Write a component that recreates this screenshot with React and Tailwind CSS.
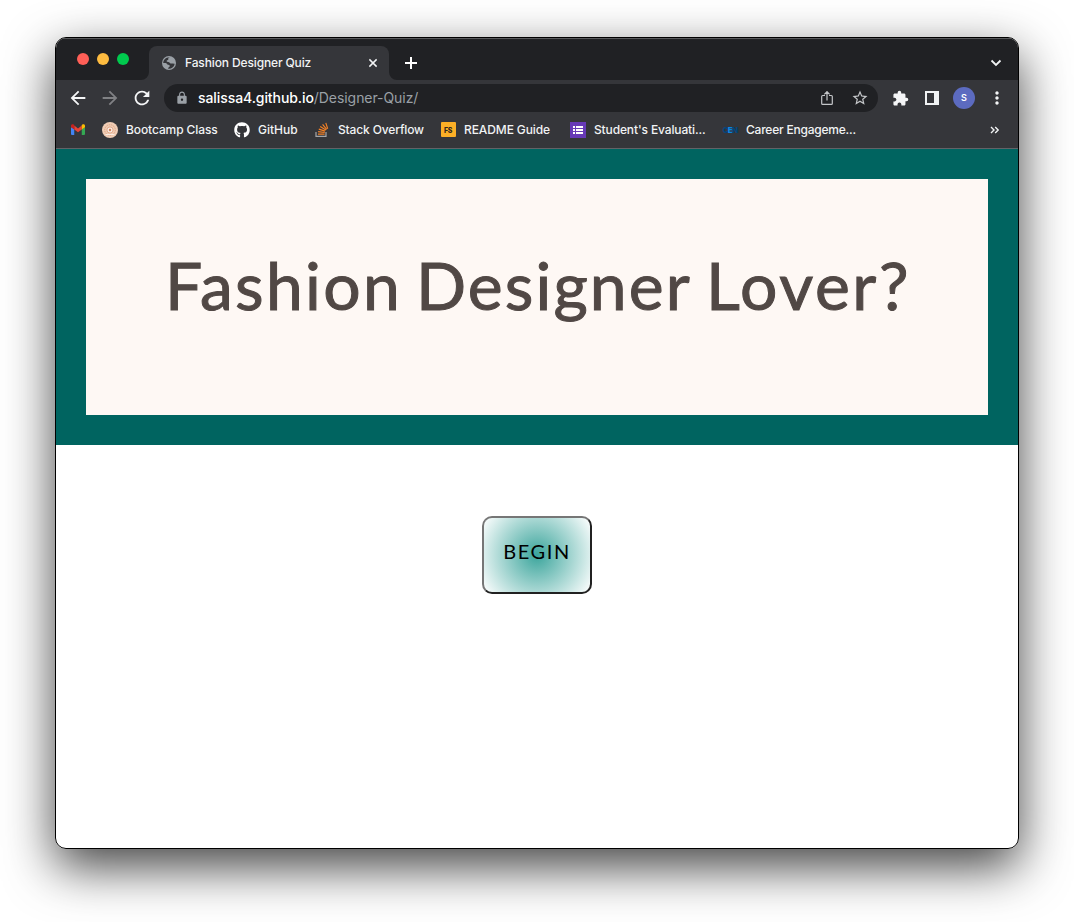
import React from "react";
import { MdArrowBack, MdArrowForward, MdRefresh, MdLock, MdStarBorder, MdExtension, MdMoreVert } from "react-icons/md";
import { FaGithub } from "react-icons/fa";

function GlobeIcon() {
  return (
    <svg width="16" height="16" viewBox="0 0 16 16">
      <circle cx="8" cy="8" r="7" fill="#9aa0a6" />
      <path d="M8.8 2.3 C7.2 2.8 7 3.8 7.4 4.6 C6.8 5.6 5.6 5.2 5.6 6.3 C5.8 7.4 8.3 6.9 8.9 7.9 C9.6 9 11 8.3 12 8.4 C13 8.5 13.4 8.6 13.7 8.7 A5.8 5.8 0 0 1 7.2 13.8 C6.9 12.6 7.6 12.3 8.3 11.9 C9.3 11.2 8.7 9.9 7.2 9.8 C5.8 9.6 5.9 8 4.5 8 L2.2 8 C2.2 6.6 2.9 5 4 4 C5 3 6.6 2.2 8.8 2.3Z" fill="#35363a" />
    </svg>
  );
}

function GmailIcon() {
  return (
    <svg width="14" height="11" viewBox="0 0 28 22">
      <path d="M0 6 L6.5 10.5 V22 H2 A2 2 0 0 1 0 20Z" fill="#4285f4" />
      <path d="M28 6 L21.5 10.5 V22 H26 A2 2 0 0 0 28 20Z" fill="#34a853" />
      <path d="M6.5 3.2 L14 9 L21.5 3.2 V11 L14 16.5 L6.5 11Z" fill="#ea4335" />
      <path d="M0 3.5 C0 .5 3 -.7 5.3 1.2 L6.5 2.1 V11 L0 6.3Z" fill="#c5221f" />
      <path d="M28 3.5 C28 .5 25 -.7 22.7 1.2 L21.5 2.1 V11 L28 6.3Z" fill="#fbbc04" />
    </svg>
  );
}

function BootcampIcon() {
  return (
    <svg width="16" height="16" viewBox="0 0 16 16">
      <circle cx="8" cy="8" r="8" fill="#f0cdb5" />
      <circle cx="8" cy="8" r="5.3" fill="none" stroke="#dfa382" strokeWidth="1" strokeDasharray="1.5 .8" />
      <circle cx="8" cy="8" r="3.1" fill="#faece2" stroke="#dfa382" strokeWidth=".9" />
      <circle cx="8" cy="8" r="1.2" fill="#cf805c" />
      <path d="M3.5 12.5 H12.5" stroke="#faece2" strokeWidth="1.2" />
    </svg>
  );
}

function StackIcon() {
  return (
    <svg width="14" height="16" viewBox="0 0 14 16" fill="none">
      <path d="M1 10 V14.3 H11 V10" stroke="#a6a7a9" strokeWidth="1.2" />
      <path d="M3 12.1 H9.6 M3.1 9.6 L9.7 10.5 M3.8 7.1 L10.1 9.1 M5.2 4.6 L10.9 8 M7.6 2.3 L11.7 7.3 M10.8 .9 L12.7 6.7" stroke="#f48024" strokeWidth="1.15" />
    </svg>
  );
}

function FormsIcon() {
  return (
    <svg width="16" height="16" viewBox="0 0 16 16">
      <rect width="16" height="16" fill="#673ab7" />
      <g fill="#fff">
        <rect x="3" y="4" width="2" height="2" /><rect x="6" y="4" width="7" height="2" />
        <rect x="3" y="7" width="2" height="2" /><rect x="6" y="7" width="7" height="2" />
        <rect x="3" y="10" width="2" height="2" /><rect x="6" y="10" width="7" height="2" />
      </g>
    </svg>
  );
}

function ShareIcon() {
  return (
    <svg width="14" height="16" viewBox="0 0 14 16" fill="none" stroke="#c4c6c9" strokeWidth="1.2">
      <path d="M5 5.5 H2.6 Q1.7 5.5 1.7 6.4 V13.4 Q1.7 14.3 2.6 14.3 H11.4 Q12.3 14.3 12.3 13.4 V6.4 Q12.3 5.5 11.4 5.5 H9 M7 10.5 V2 M4.4 4.3 L7 1.7 L9.6 4.3" />
    </svg>
  );
}

function TabStrip() {
  return (
    <div className="flex h-[42px] shrink-0 bg-[#202124] shadow-[inset_0_1px_0_#58595b]">
      <div className="flex w-[93px] items-center gap-2 pl-[21px]">
        <span className="size-3 rounded-full bg-[#ff5f57]" />
        <span className="size-3 rounded-full bg-[#febc40]" />
        <span className="size-3 rounded-full bg-[#00ca4e]" />
      </div>
      <div className="flex flex-col justify-end">
        <svg className="-ml-2" width="8" height="8"><path d="M8 0 V8 H0 A8 8 0 0 0 8 0Z" fill="#35363a" /></svg>
      </div>
      <div className="mt-2 flex w-[240px] items-center rounded-t-lg bg-[#35363a] pl-3">
        <GlobeIcon />
        <span className="ml-2 w-[177px] text-[12px] font-medium tracking-[-0.13px] text-[#f1f3f4]">Fashion Designer Quiz</span>
        <svg className="ml-[6px]" width="10" height="10" viewBox="0 0 11 11" stroke="#f1f3f4" strokeWidth="1.6"><path d="M1.5 1.5 L9.5 9.5 M9.5 1.5 L1.5 9.5" /></svg>
      </div>
      <div className="flex flex-col justify-end">
        <svg width="8" height="8"><path d="M0 0 V8 H8 A8 8 0 0 1 0 0Z" fill="#35363a" /></svg>
      </div>
      <div className="flex flex-1 items-center justify-between pt-2 pr-[16px] pl-[8px]">
        <svg width="12" height="12" viewBox="0 0 12 12" stroke="#fff" strokeWidth="2"><path d="M6 0 V12 M0 6 H12" /></svg>
        <svg width="12" height="8" viewBox="0 0 12 8" fill="none" stroke="#f1f3f4" strokeWidth="1.8"><path d="M1.5 1.5 L6 6 L10.5 1.5" /></svg>
      </div>
    </div>
  );
}

function Toolbar() {
  return (
    <div className="flex h-9 shrink-0 items-center bg-[#35363a] pl-[11px]">
      <MdArrowBack size={22} color="#f5f6f7" />
      <MdArrowForward className="ml-[10px]" size={22} color="#808184" />
      <MdRefresh className="ml-[10px]" size={22} color="#f5f6f7" />
      <div className="ml-[11px] flex h-7 w-[714px] items-center rounded-full bg-[#202124] pl-[11px]">
        <MdLock size={14} color="#9aa0a6" />
        <span className="ml-[9px] w-[622px] pb-px text-[14px] text-[#9aa0a6]">
          <span className="font-medium tracking-[-0.08px] text-white">salissa4.github.io</span>
          <span className="tracking-[-0.06px]">/Designer-Quiz/</span>
        </span>
        <ShareIcon />
        <MdStarBorder className="ml-[17px]" size={18} color="#c4c6c9" />
      </div>
      <MdExtension className="ml-[14px]" size={17} color="#f5f6f7" />
      <svg className="ml-[16px]" width="14" height="14"><rect width="14" height="14" fill="#f1f3f4" /><rect x="2" y="2" width="7" height="10" fill="#35363a" /></svg>
      <span className="ml-[14px] flex size-[22px] items-center justify-center rounded-full bg-[#5c6bc0] text-[9px] font-semibold text-white">S</span>
      <MdMoreVert className="ml-[12px]" size={20} color="#f5f6f7" />
    </div>
  );
}

function Bookmark({ icon, label, className }) {
  return (
    <div className={"flex items-center " + className}>
      <span className="flex w-4 shrink-0 items-center justify-center">{icon}</span>
      <span className="ml-2 whitespace-nowrap">{label}</span>
    </div>
  );
}

function BookmarksBar() {
  return (
    <div className="flex h-[33px] shrink-0 border-b border-[#626367] bg-[#35363a] pb-[5px] pl-[15px] text-[12px] font-medium tracking-[-0.1px] text-[#f1f3f4]">
      <div className="flex w-[31px] items-center"><GmailIcon /></div>
      <Bookmark className="w-[132px]" icon={<BootcampIcon />} label="Bootcamp Class" />
      <Bookmark className="w-[80px] tracking-[0px]" icon={<FaGithub size={16} color="#fff" />} label="GitHub" />
      <Bookmark className="w-[126px] tracking-[-0.14px]" icon={<StackIcon />} label="Stack Overflow" />
      <Bookmark
        className="w-[130px]"
        icon={<span className="flex size-[15px] items-center justify-center rounded-[1px] bg-[#fcaf26] pt-px text-[7px] leading-none font-extrabold tracking-[-0.3px] text-[#33281a]">FS</span>}
        label="README Guide"
      />
      <Bookmark className="w-[152px] tracking-[-0.13px]" icon={<FormsIcon />} label="Student's Evaluati..." />
      <Bookmark
        className="flex-1 tracking-[-0.22px]"
        icon={<span className="flex text-[8px] leading-none font-black tracking-[-0.7px] text-[#064479]">C<span className="text-[#0a84e0]">E</span>N</span>}
        label="Career Engageme..."
      />
      <div className="flex w-[28px] items-center">
        <svg width="10" height="8" viewBox="0 0 10 8" fill="none" stroke="#f1f3f4" strokeWidth="1.4"><path d="M1 1 L4 4 L1 7 M5.2 1 L8.2 4 L5.2 7" /></svg>
      </div>
    </div>
  );
}

export default function App() {
  return (
    <div className="h-[922px] w-[1074px] overflow-hidden bg-white pt-[37px] pl-[55px] font-['Inter',sans-serif]">
      <div className="h-[812px] w-[964px] rounded-[11px] shadow-[0_18px_50px_rgba(0,0,0,0.74)]">
        <div className="flex h-full flex-col overflow-hidden rounded-[11px] border border-black bg-white">
          <TabStrip />
          <Toolbar />
          <BookmarksBar />
          <header className="h-[296px] shrink-0 bg-[#006460] p-[30px]">
            <div className="h-[236px] bg-[#fef8f4] pt-[66px] pl-[79px]">
              <h1 className="flex font-['Papyrus','Lato',sans-serif] text-[66px] leading-[80px] whitespace-pre text-[#514845] [-webkit-text-stroke:1px_#514845]">
                <span className="w-[251px] tracking-[2.3px]">Fashion </span>
                <span className="w-[290px] tracking-[2.1px]">Designer </span>
                <span className="tracking-[2.6px]">Lover?</span>
              </h1>
            </div>
          </header>
          <main className="flex justify-center pt-[71px]">
            <button className="h-[78px] w-[110px] rounded-[10px] border-2 border-t-[#767676] border-r-[#212121] border-b-[#212121] border-l-[#767676] bg-[radial-gradient(circle,#3ba59c,#ffffff)] pb-[8px] font-['Papyrus','Lato',sans-serif] text-[20px] tracking-[1.6px] text-black">BEGIN</button>
          </main>
        </div>
      </div>
    </div>
  );
}
